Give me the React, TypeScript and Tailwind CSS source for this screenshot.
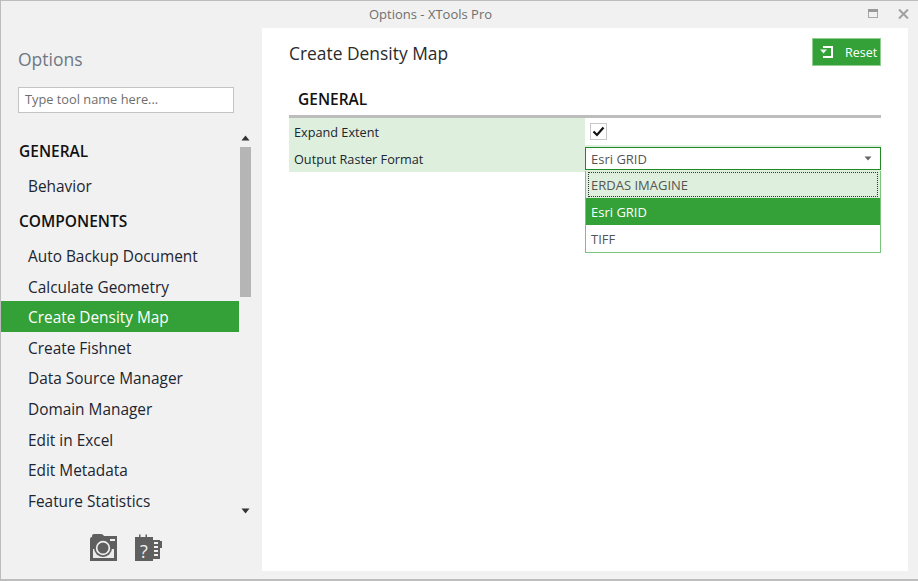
function NavItem({ label, active }: { label: string; active?: boolean }) {
  return (
    <div className={`h-[30.6px] pl-[27px] text-[15.4px] leading-[34px] whitespace-nowrap ${active ? "bg-[#33a137] text-white" : "text-[#1c2530]"}`}>
      {label}
    </div>
  );
}

function NavHead({ label }: { label: string }) {
  return <div className="pl-[18px] text-[15.5px] font-semibold text-[#111] h-[35px] leading-[34px]">{label}</div>;
}

const items = ["Auto Backup Document", "Calculate Geometry", "Create Density Map", "Create Fishnet", "Data Source Manager", "Domain Manager", "Edit in Excel", "Edit Metadata", "Feature Statistics"];

export default function App() {
  return (
    <div className="w-[918px] h-[581px] bg-[#f1f1f1] border-t border-l border-b-2 border-[#bdbdbd] flex flex-col overflow-hidden font-['Open_Sans',sans-serif]">
      <div className="h-[27px] shrink-0 flex items-center relative">
        <div className="flex-1 text-center text-[13px] text-[#6f6f6f] pr-[58px] pt-[1px]">Options - XTools Pro</div>
        <div className="absolute right-[9px] top-[8px] flex gap-[20px] items-start">
          <svg width="10" height="9" viewBox="0 0 10 9"><rect x="0.500" y="0.500" width="9" height="8" fill="none" stroke="#a8a8a8" /><rect x="0" y="0" width="10" height="3" fill="#9a9a9a" /></svg>
          <svg width="11" height="10" viewBox="0 0 11 10"><path d="M1 0.500l9 9M10 0.500l-9 9" stroke="#a0a0a0" strokeWidth="2" /></svg>
        </div>
      </div>
      <div className="flex-1 flex min-h-0 pb-[8px] pr-[10px]">
        <aside className="w-[261px] shrink-0 flex flex-col">
          <div className="pl-[17px] pt-[17px] text-[17.5px] leading-[28px] text-[#6e7884]">Options</div>
          <div className="pl-[17px] pt-[14px]">
            <div className="w-[216px] h-[26px] bg-white border border-[#c4c4c4] pl-[6px] text-[12.8px] leading-[23px] text-[#6e6e6e]">Type tool name here...</div>
          </div>
          <div className="flex mt-[20px] h-[386px]">
            <div className="w-[238px] overflow-hidden pt-[1px]">
              <NavHead label="GENERAL" />
              <div className="h-[35px] pl-[27px] text-[15.4px] leading-[35px] text-[#1c2530]">Behavior</div>
              <NavHead label="COMPONENTS" />
              <div className="pt-[1px]">
                {items.map((it) => <NavItem key={it} label={it} active={it === "Create Density Map"} />)}
              </div>
            </div>
            <div className="w-[12px] flex flex-col items-center">
              <svg className="mt-[2px] shrink-0" width="9" height="6" viewBox="0 0 9 6"><path d="M4.500 0.500L8.500 5.500H0.500Z" fill="#333" /></svg>
              <div className="w-[11px] h-[150px] mt-[6px] bg-[#b5b5b5]" />
              <div className="flex-1" />
              <svg className="mb-[5px] shrink-0" width="9" height="6" viewBox="0 0 9 6"><path d="M0.500 0.500H8.500L4.500 5.500Z" fill="#333" /></svg>
            </div>
          </div>
          <div className="flex gap-[18px] pl-[89px] pt-[15px]">
            <svg width="27" height="27" viewBox="0 0 27 27">
              <path d="M0 5q0-2 2-2V2q0-2 2-2h7q2 0 3 2h13v25H0z" fill="#5f5f5f" />
              <rect x="20" y="5" width="5" height="2" fill="#f1f1f1" />
              <rect x="3" y="15" width="21" height="9" fill="#ececec" />
              <circle cx="13" cy="14" r="9" fill="#5f5f5f" />
              <circle cx="13" cy="14" r="7.200" fill="#f1f1f1" />
              <circle cx="13" cy="14" r="5.500" fill="#5f5f5f" />
            </svg>
            <svg width="27" height="30" viewBox="0 0 27 30">
              <path d="M0 3h4V0.500h1.500V3h5V0.500H12V3h6v3h7v1h2v7h-2v11h-7v2H0z" fill="#5f5f5f" />
              <rect x="19" y="8" width="4" height="2" fill="#f1f1f1" />
              <rect x="19" y="12" width="4" height="2" fill="#f1f1f1" />
              <rect x="19" y="16" width="4" height="2" fill="#f1f1f1" />
              <rect x="19" y="20" width="4" height="2" fill="#f1f1f1" />
              <text x="9" y="24" fontSize="18" textAnchor="middle" fill="#f1f1f1" fontFamily="Open Sans">?</text>
            </svg>
          </div>
        </aside>
        <main className="flex-1 bg-white pt-[11px] pl-[27px] pr-[27px]">
          <div className="flex justify-between items-start h-[47px]">
            <div className="text-[17.4px] leading-[29px] text-[#2b2b2b]">Create Density Map</div>
            <div className="w-[69px] h-[28px] -mt-[1px] bg-[#33a137] border border-[#8fd092] flex items-center text-white text-[12.500px]">
              <svg className="ml-[7px] shrink-0" width="13" height="12" viewBox="0 0 13 12"><path d="M3 0h10v12H3V10h8V2H3z" fill="#fff" /><path d="M0 3.500h7L3.500 7.500z" fill="#e8f5e8" /></svg>
              <span className="ml-[12px] pt-[2px]">Reset</span>
            </div>
          </div>
          <div className="pl-[9px] text-[15.5px] font-semibold text-[#111] leading-[23px] h-[29px] pt-[2px]">GENERAL</div>
          <div className="h-[3px] bg-[#bdbdbd]" />
          <div className="relative">
            <div className="grid grid-cols-[296px_296px] grid-rows-[27px_27px]">
              <div className="bg-[#def0dd] pl-[5px] pt-[1px] text-[12.700px] leading-[26px] text-[#1c2530]">Expand Extent</div>
              <div className="pl-[5px] pt-[5px]">
                <div className="w-[17px] h-[17px] border border-[#c8c8c8] flex items-center justify-center">
                  <svg width="13" height="11" viewBox="0 0 13 11"><path d="M1.500 5.500l3.500 3.500 6.500-7.500" fill="none" stroke="#111" strokeWidth="2.200" /></svg>
                </div>
              </div>
              <div className="bg-[#def0dd] pl-[5px] pt-[2px] text-[12.700px] leading-[25px] text-[#1c2530]">Output Raster Format</div>
              <div className="bg-[#def0dd] pt-[2px]">
                <div className="h-[23px] bg-white border border-[#1f8a23] pl-[5px] pr-[8px] flex items-center justify-between text-[13px] text-[#555]">
                  <span className="pt-[2px]">Esri GRID</span>
                  <svg width="8" height="5" viewBox="0 0 8 5"><path d="M0.500 0.500h7L4 4.500z" fill="#666" /></svg>
                </div>
              </div>
            </div>
            <div className="absolute left-[296px] top-[53px] w-[296px] h-[82px] bg-white border border-t-0 border-[#77c47a] text-[13px] text-[#555]">
              <div className="h-[27px] bg-[#def0dd] px-[2px] py-[1px]">
                <div className="h-full border border-dotted border-[#333] pl-[2px] leading-[24px]">ERDAS IMAGINE</div>
              </div>
              <div className="h-[27px] bg-[#33a137] text-white pl-[5px] pt-[1px] leading-[26px]">Esri GRID</div>
              <div className="h-[27px] pl-[5px] pt-[1px] leading-[26px]">TIFF</div>
            </div>
          </div>
        </main>
      </div>
    </div>
  );
}
